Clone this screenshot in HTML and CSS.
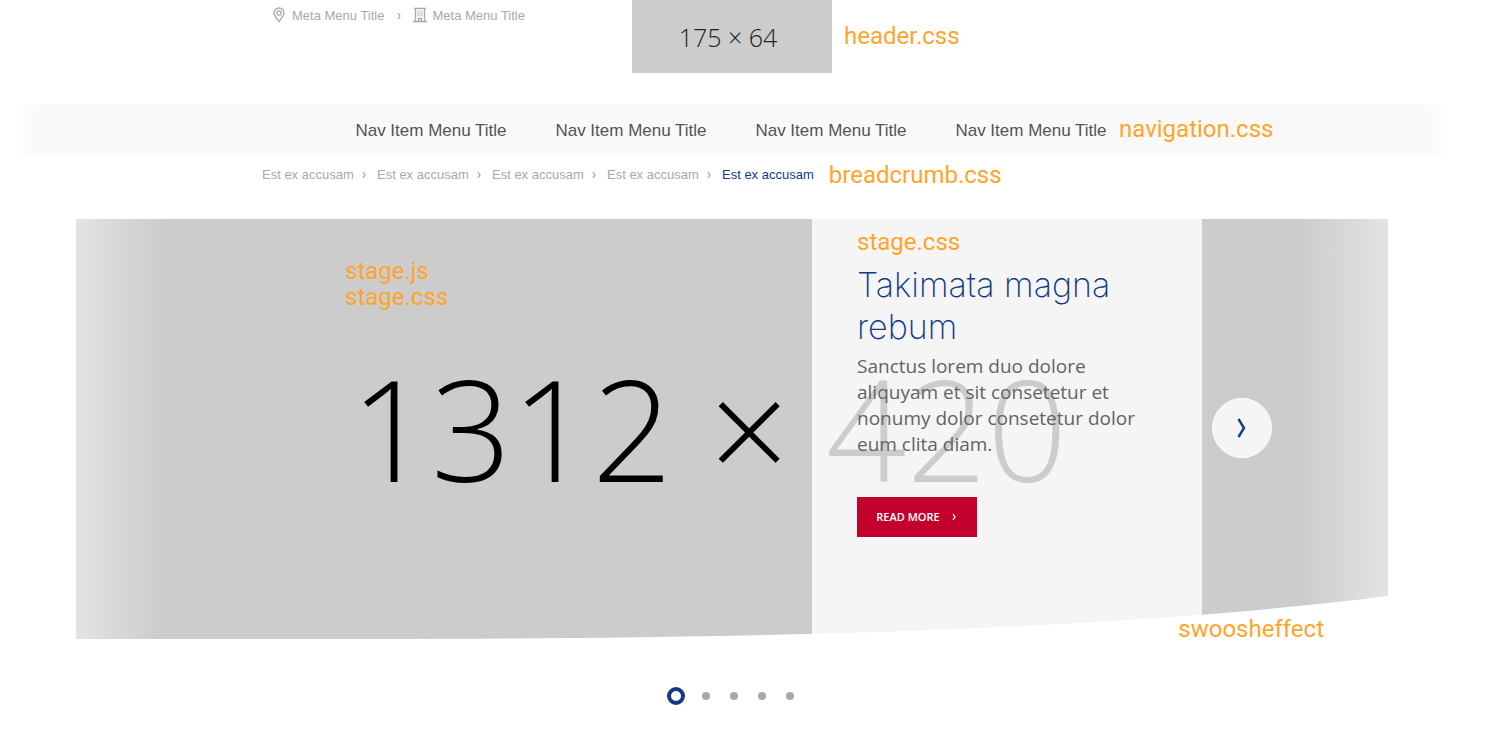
FILE: index.html
```html
<!DOCTYPE html>
<html lang="en">
<head>
<meta charset="utf-8">
<meta name="viewport" content="width=device-width, initial-scale=1">
<title>Component overview</title>
<link rel="stylesheet" href="styles.css">
</head>
<body>
<div class="page">
  <header class="header">
    <nav class="meta" aria-label="Meta">
      <a class="meta-link" href="#"><svg class="icon" viewBox="0 0 14 16" aria-hidden="true"><path d="M7 14.500C4.600 11.200 2 8.600 2 6a5 5 0 0 1 10 0c0 2.600-2.600 5.200-5 8.500z"/><circle cx="7" cy="6" r="2.200"/></svg>Meta Menu Title</a>
      <svg class="chevron" viewBox="0 0 4 8" aria-hidden="true"><path d="M1 1l2 3-2 3"/></svg>
      <a class="meta-link" href="#"><svg class="icon" viewBox="0 0 14 16" aria-hidden="true"><path d="M0 14.500h14M1 1.500h12M2.500 1.500v13M11.500 1.500v13M5.500 14.500v-3h3v3"/><path class="windows" d="M4.500 4.500h5M4.500 6.500h5M4.500 8.500h5"/></svg>Meta Menu Title</a>
    </nav>
    <div class="brand">
      <a class="logo" href="#">175 × 64</a>
      <span class="note brand-note">header.css</span>
    </div>
  </header>

  <nav class="nav" aria-label="Main">
    <ul class="nav-list">
      <li><a href="#">Nav Item Menu Title</a></li>
      <li><a href="#">Nav Item Menu Title</a></li>
      <li><a href="#">Nav Item Menu Title</a></li>
      <li class="nav-last"><a href="#">Nav Item Menu Title</a><span class="note nav-note">navigation.css</span></li>
    </ul>
  </nav>

  <nav class="breadcrumb" aria-label="Breadcrumb">
    <ol class="crumbs">
      <li><a href="#">Est ex accusam</a><svg class="chevron" viewBox="0 0 4 8" aria-hidden="true"><path d="M1 1l2 3-2 3"/></svg></li>
      <li><a href="#">Est ex accusam</a><svg class="chevron" viewBox="0 0 4 8" aria-hidden="true"><path d="M1 1l2 3-2 3"/></svg></li>
      <li><a href="#">Est ex accusam</a><svg class="chevron" viewBox="0 0 4 8" aria-hidden="true"><path d="M1 1l2 3-2 3"/></svg></li>
      <li><a href="#">Est ex accusam</a><svg class="chevron" viewBox="0 0 4 8" aria-hidden="true"><path d="M1 1l2 3-2 3"/></svg></li>
      <li><a class="current" href="#" aria-current="page">Est ex accusam</a></li>
    </ol>
    <span class="note">breadcrumb.css</span>
  </nav>

  <main>
    <section class="stage" aria-label="Stage">
      <div class="placeholder">1312 × 420</div>
      <div class="stage-note"><span class="note">stage.js</span><span class="note">stage.css</span></div>
      <div class="stage-inner">
        <article class="panel">
          <span class="note">stage.css</span>
          <h1>Takimata magna rebum</h1>
          <p>Sanctus lorem duo dolore aliquyam et sit consetetur et nonumy dolor consetetur dolor eum clita diam.</p>
          <a class="more" href="#">READ MORE<svg class="chevron" viewBox="0 0 4 8" aria-hidden="true"><path d="M1 1l2 3-2 3"/></svg></a>
        </article>
        <button class="next" type="button" aria-label="Next slide"><svg viewBox="0 0 10 20" aria-hidden="true"><path d="M1.500 1l5.500 9-5.500 9"/></svg></button>
      </div>
      <svg class="swoosh" viewBox="0 0 1312 43" preserveAspectRatio="none" aria-hidden="true"><path d="M300 43C700 43 1050 33 1312 0V44H300z"/></svg>
      <span class="note swoosh-note">swoosheffect</span>
    </section>
    <div class="dots">
      <button class="dot active" type="button" aria-label="Slide 1"></button>
      <button class="dot" type="button" aria-label="Slide 2"></button>
      <button class="dot" type="button" aria-label="Slide 3"></button>
      <button class="dot" type="button" aria-label="Slide 4"></button>
      <button class="dot" type="button" aria-label="Slide 5"></button>
    </div>
  </main>
</div>
</body>
</html>
```
FILE: styles.css
```css
* {
  box-sizing: border-box;
}

body {
  margin: 0;
  background: #fff;
  font-family: "Liberation Sans", Arial, sans-serif;
  color: #545456;
}

a {
  color: inherit;
  text-decoration: none;
}

ul,
ol {
  list-style: none;
  margin: 0;
  padding: 0;
}

svg {
  fill: none;
  stroke: currentColor;
  flex: none;
}

.page {
  padding-right: 32px;
}

.note {
  font: 24px/26px Roboto, sans-serif;
  color: #ffa42c;
  white-space: nowrap;
}

.chevron {
  width: 4px;
  height: 8px;
  stroke-width: 1.3;
}

/* Header */
.header {
  display: grid;
  grid-template-columns: 1fr 200px 1fr;
  align-items: start;
  height: 105px;
}

.meta {
  grid-column: 1;
  justify-self: end;
  width: 360px;
  display: flex;
  align-items: center;
  gap: 12px;
  padding-top: 7px;
  font-size: 13px;
  line-height: 18px;
  color: #a9a9a9;
  white-space: nowrap;
}

.meta-link {
  display: flex;
  align-items: center;
  gap: 6px;
}

.icon {
  width: 14px;
  height: 16px;
  margin-bottom: 2px;
  stroke-width: 1.3;
}

.windows {
  stroke-dasharray: 1 1;
}

.brand {
  grid-column: 2;
  display: flex;
  align-items: center;
  gap: 12px;
}

.brand-note {
  padding-bottom: 2px;
}

.logo {
  flex: none;
  width: 200px;
  padding: 19px 8px 18px 0;
  background: #ccc;
  color: #222;
  font: 300 25px/36px "Open Sans", sans-serif;
  text-align: center;
}

/* Navigation */
.nav {
  max-width: 1432px;
  margin: 0 auto;
  background: linear-gradient(to right, #fff, #f9f9f9 24px, #f9f9f9 calc(100% - 24px), #fff);
}

.nav-list {
  display: grid;
  grid-template-columns: repeat(4, 200px);
  justify-content: center;
  padding: 1px 2px 0 0;
  font-size: 17px;
  line-height: 49px;
  text-align: center;
}

.nav-last {
  position: relative;
}

.nav-note {
  position: absolute;
  top: 10px;
  left: 188px;
}

/* Breadcrumb */
.breadcrumb {
  display: flex;
  align-items: center;
  gap: 15px;
  max-width: 940px;
  margin: 0 auto;
  padding: 7px 0 31px;
  font-size: 13px;
  color: #a9a9a9;
}

.crumbs {
  display: grid;
  grid-template-columns: repeat(4, 115px) auto;
  padding-bottom: 2px;
  white-space: nowrap;
}

.crumbs li {
  display: flex;
  align-items: center;
  gap: 8px;
}

.crumbs .chevron {
  margin-top: 2px;
}

.current {
  color: #123a87;
}

/* Stage */
.stage {
  position: relative;
  max-width: 1312px;
  margin: 0 auto;
  background: linear-gradient(to right, #e4e4e4, #ccc 86px, #ccc calc(100% - 86px), #e4e4e4);
}

.placeholder {
  position: absolute;
  inset: 0;
  display: flex;
  align-items: center;
  justify-content: center;
  padding: 0 46px 4px 0;
  color: #000;
  font: 300 141px/190px "Open Sans", sans-serif;
  white-space: nowrap;
}

.stage-note {
  position: absolute;
  top: 39px;
  left: 269px;
  display: flex;
  flex-direction: column;
}

.stage-inner {
  position: relative;
  display: flex;
  justify-content: flex-end;
  max-width: 940px;
  margin: 0 auto;
}

.panel {
  width: 390px;
  min-height: 420px;
  padding: 10px 45px 0;
  background: rgba(255, 255, 255, 0.8);
}

.panel .note {
  display: block;
}

.panel h1 {
  margin: 9px 0 5px;
  color: #123a87;
  font: 200 34px/42px Inter, sans-serif;
}

.panel p {
  margin: 0 0 40px;
  color: #636365;
  font: 19px/26px "Open Sans", sans-serif;
}

.more {
  display: inline-flex;
  align-items: center;
  justify-content: center;
  gap: 12px;
  width: 120px;
  height: 40px;
  padding-right: 2px;
  background: #c3002b;
  color: #fff;
  font: 600 11px/16px "Open Sans", sans-serif;
}

.next {
  position: absolute;
  top: calc(50% - 31px);
  left: calc(100% + 10px);
  width: 60px;
  height: 60px;
  padding: 0;
  border: 1px solid #fff;
  border-radius: 50%;
  background: #f5f5f5;
  color: #123a87;
}

.next svg {
  width: 10px;
  height: 20px;
  stroke-width: 2.4;
  vertical-align: middle;
}

.swoosh {
  position: absolute;
  left: 0;
  bottom: 0;
  width: 100%;
  height: 43px;
  fill: #fff;
  stroke: none;
}

.swoosh-note {
  position: absolute;
  right: 64px;
  bottom: -3px;
}

/* Pager */
.dots {
  display: flex;
  align-items: center;
  justify-content: center;
  gap: 20px;
  padding: 48px 3px 28px 0;
}

.dot {
  width: 8px;
  height: 8px;
  padding: 0;
  border: 0;
  border-radius: 50%;
  background: #a8a8a8;
}

.dot.active {
  width: 18px;
  height: 18px;
  margin-right: -3px;
  border: 4px solid #123a87;
  background: #fff;
}
```
